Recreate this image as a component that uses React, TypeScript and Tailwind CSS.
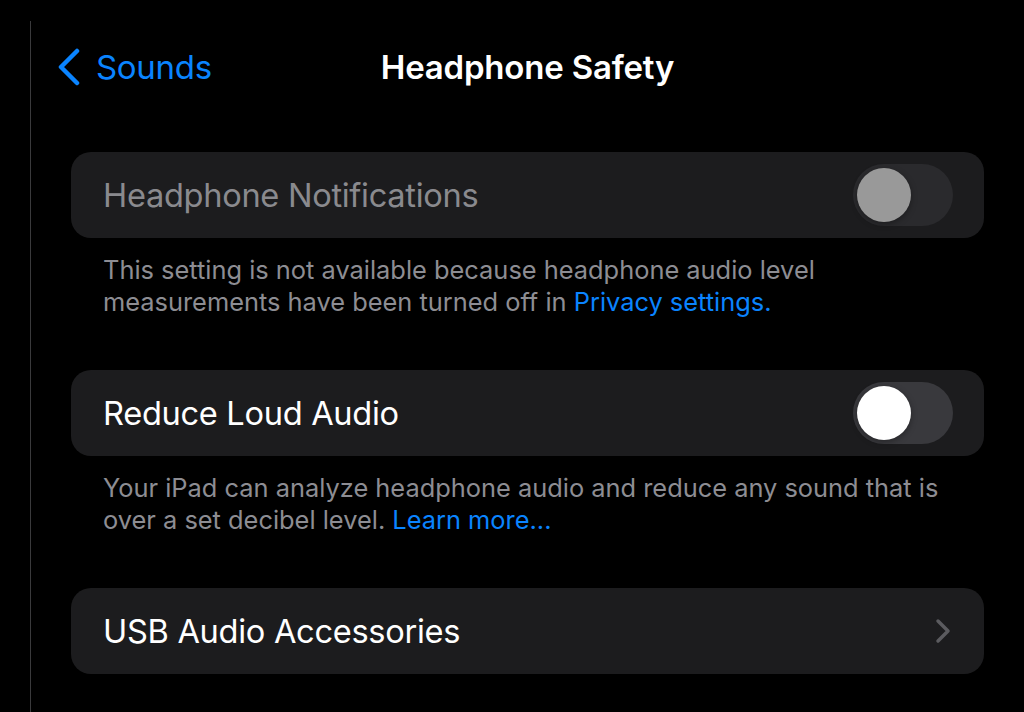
import { ReactNode } from 'react';

const FONT = "font-['Inter','Noto_Sans',sans-serif]";

function Toggle({ on, disabled }: { on?: boolean; disabled?: boolean }) {
  return (
    <div
      className={
        'flex h-[62px] w-[100px] shrink-0 items-center rounded-full px-[4px] ' +
        (disabled ? 'bg-[#2a2a2d]' : 'bg-[#39393d]') +
        (on ? ' justify-end' : ' justify-start')
      }
    >
      <div
        className={
          'h-[54px] w-[54px] rounded-full shadow-[0_2px_6px_rgba(0,0,0,0.35)] ' +
          (disabled ? 'bg-[#999999]' : 'bg-white')
        }
      />
    </div>
  );
}

function Card({ children }: { children: ReactNode }) {
  return (
    <div className="flex h-[86px] items-center justify-between rounded-[20px] bg-[#1c1c1e] pl-8 pr-[31px]">
      {children}
    </div>
  );
}

function Footer({ children }: { children: ReactNode }) {
  return (
    <p className="mb-[52px] whitespace-nowrap pl-8 pt-4 text-[25.4px] leading-[32px] text-[#8d8d93]">
      {children}
    </p>
  );
}

export default function App() {
  return (
    <div className={'flex h-[712px] w-[1024px] overflow-hidden bg-black ' + FONT}>
      <div className="w-[30px] shrink-0" />
      <div className="mt-[21px] w-px shrink-0 bg-[#3a3a3c]" />

      <main className="flex min-w-0 flex-1 flex-col">
        {/* Nav bar */}
        <header className="grid h-[134px] grid-cols-[1fr_auto_1fr] items-center">
          <button type="button" className="flex items-center gap-[15px] pl-[26px] text-[#0a84ff]">
            <svg width="24" height="38" viewBox="0 0 24 38" fill="none">
              <path
                d="M20 3 L4 19 L20 35"
                stroke="currentColor"
                strokeWidth="4.5"
                strokeLinecap="round"
                strokeLinejoin="round"
              />
            </svg>
            <span className="text-[33px] leading-none tracking-[-0.3px]">Sounds</span>
          </button>
          <h1 className="text-[33px] font-semibold leading-none tracking-[-0.2px] text-white">
            Headphone Safety
          </h1>
          <div />
        </header>

        <div className="px-10 pt-[18px]">
          <Card>
            <span className="text-[32.6px] tracking-[-0.3px] text-[#8a8a8e]">Headphone Notifications</span>
            <Toggle disabled />
          </Card>
          <Footer>
            This setting is not available because headphone audio level
            <br />
            measurements have been turned off in{' '}
            <span className="text-[#0a84ff]">Privacy settings.</span>
          </Footer>

          <Card>
            <span className="text-[32.6px] tracking-[-0.3px] text-white">Reduce Loud Audio</span>
            <Toggle />
          </Card>
          <Footer>
            Your iPad can analyze headphone audio and reduce any sound that is
            <br />
            over a set decibel level. <span className="text-[#0a84ff]">Learn more...</span>
          </Footer>

          <Card>
            <span className="text-[32.6px] tracking-[-0.3px] text-white">USB Audio Accessories</span>
            <svg width="16" height="26" viewBox="0 0 16 26" fill="none" className="mr-[2px]">
              <path
                d="M3 3 L13 13 L3 23"
                stroke="#5b5b5f"
                strokeWidth="3.5"
                strokeLinecap="round"
                strokeLinejoin="round"
              />
            </svg>
          </Card>
        </div>
      </main>
    </div>
  );
}
